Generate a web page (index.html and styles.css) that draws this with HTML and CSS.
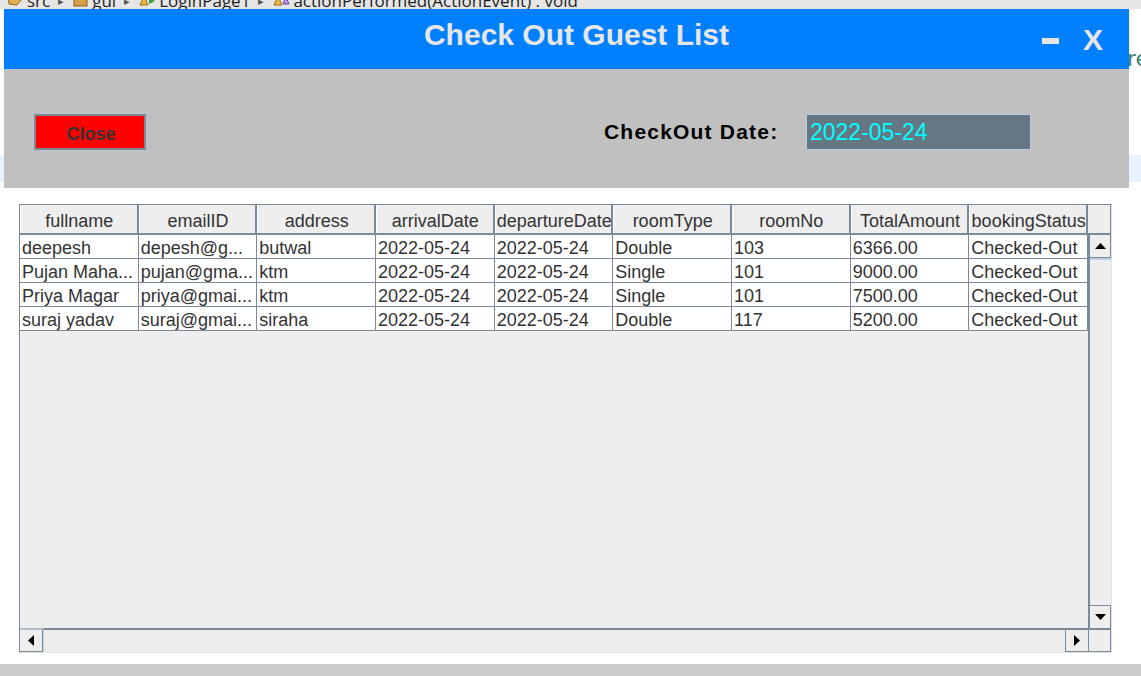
FILE: index.html
```html
<!DOCTYPE html>
<html lang="en">
<head>
<meta charset="utf-8">
<title>Check Out Guest List</title>
<link rel="stylesheet" href="styles.css">
</head>
<body>
<div class="screen">
  <div class="crumbs">
    <div class="crumbs-line">
      <svg class="ci" width="17" height="16" viewBox="0 0 17 16"><path d="M1 6 L7 4 L15 6 L10 12 L2 11 Z" fill="#e0b050" stroke="#9a6a20" stroke-width="1"/></svg>
      <span class="ct">src</span>
      <span class="sep">▸</span>
      <svg class="ci" width="16" height="16" viewBox="0 0 16 16"><rect x="1" y="3" width="13" height="10" fill="#d9a24a" stroke="#8a5a1a"/></svg>
      <span class="ct">gui</span>
      <span class="sep">▸</span>
      <svg class="ci" width="17" height="16" viewBox="0 0 17 16"><path d="M1 12 L5 3 L9 12 Z" fill="#e8b840" stroke="#9a7010"/><path d="M10 5 L16 8 L10 11 Z" fill="#30a040"/></svg>
      <span class="ct">LoginPage1</span>
      <span class="sep">▸</span>
      <svg class="ci" width="17" height="16" viewBox="0 0 17 16"><path d="M1 12 L5 3 L9 12 Z" fill="#e8b840" stroke="#9a7010"/><path d="M10 11 L13 4 L16 11 Z" fill="#c0a0e0" stroke="#6040a0"/></svg>
      <span class="ct">actionPerformed(ActionEvent) : void</span>
    </div>
  </div>
  <div class="line-hl"></div>
  <div class="code-peek">re</div>

  <div class="frame">
    <header class="titlebar">
      <h1 class="title">Check Out Guest List</h1>
      <div class="controls">
        <span class="min"></span>
        <span class="x">X</span>
      </div>
    </header>

    <div class="toolbar">
      <button class="close-btn">Close</button>
      <span class="date-label">CheckOut Date:</span>
      <div class="date-field">2022-05-24</div>
    </div>

    <div class="content">
      <div class="scrollpane">
        <div class="thead">
          <div class="th">fullname</div>
          <div class="th">emailID</div>
          <div class="th">address</div>
          <div class="th">arrivalDate</div>
          <div class="th">departureDate</div>
          <div class="th">roomType</div>
          <div class="th">roomNo</div>
          <div class="th">TotalAmount</div>
          <div class="th">bookingStatus</div>
        </div>
        <div class="hcorner-top"></div>

        <div class="viewport">
          <div class="tr">
            <div class="td">deepesh</div><div class="td">depesh@g...</div><div class="td">butwal</div>
            <div class="td">2022-05-24</div><div class="td">2022-05-24</div><div class="td">Double</div>
            <div class="td">103</div><div class="td">6366.00</div><div class="td">Checked-Out</div>
          </div>
          <div class="tr">
            <div class="td">Pujan Maha...</div><div class="td">pujan@gma...</div><div class="td">ktm</div>
            <div class="td">2022-05-24</div><div class="td">2022-05-24</div><div class="td">Single</div>
            <div class="td">101</div><div class="td">9000.00</div><div class="td">Checked-Out</div>
          </div>
          <div class="tr">
            <div class="td">Priya Magar</div><div class="td">priya@gmai...</div><div class="td">ktm</div>
            <div class="td">2022-05-24</div><div class="td">2022-05-24</div><div class="td">Single</div>
            <div class="td">101</div><div class="td">7500.00</div><div class="td">Checked-Out</div>
          </div>
          <div class="tr">
            <div class="td">suraj yadav</div><div class="td">suraj@gmai...</div><div class="td">siraha</div>
            <div class="td">2022-05-24</div><div class="td">2022-05-24</div><div class="td">Double</div>
            <div class="td">117</div><div class="td">5200.00</div><div class="td">Checked-Out</div>
          </div>
        </div>

        <div class="vscroll">
          <div class="vbtn vbtn-up"><svg width="11" height="6" viewBox="0 0 11 6"><polygon points="0,6 5.5,0 11,6" fill="#000"/></svg></div>
          <div class="vtrack"></div>
          <div class="vbtn vbtn-down"><svg width="11" height="6" viewBox="0 0 11 6"><polygon points="0,0 11,0 5.5,6" fill="#000"/></svg></div>
        </div>

        <div class="hscroll">
          <div class="hbtn hbtn-left"><svg width="6" height="11" viewBox="0 0 6 11"><polygon points="6,0 6,11 0,5.5" fill="#000"/></svg></div>
          <div class="htrack"></div>
          <div class="hbtn hbtn-right"><svg width="6" height="11" viewBox="0 0 6 11"><polygon points="0,0 6,5.5 0,11" fill="#000"/></svg></div>
        </div>
        <div class="hcorner"></div>
      </div>
    </div>
  </div>

  <div class="statusbar"></div>
</div>
</body>
</html>
```

FILE: styles.css
```css
* { box-sizing: border-box; }

html, body {
  margin: 0;
  padding: 0;
  background: #ffffff;
}

body {
  font-family: "Liberation Sans", Arial, sans-serif;
}

.screen {
  position: relative;
  width: 1141px;
  height: 676px;
  overflow: hidden;
  background: #ffffff;
}

/* Eclipse breadcrumb peeking above the window */
.crumbs {
  height: 9px;
  background: #e6e6e6;
  overflow: hidden;
  font-family: "Open Sans", "Noto Sans", sans-serif;
  font-size: 17px;
  color: #1e1e1e;
}

.crumbs-line {
  display: flex;
  align-items: center;
  height: 16px;
  margin-top: -7px;
  line-height: 16px;
  padding-left: 7px;
  white-space: nowrap;
}

.ci { flex: 0 0 auto; margin-right: 3px; }

.sep {
  font-size: 11px;
  color: #555;
  margin: 0 9px 0 8px;
}

.line-hl {
  position: absolute;
  left: 0;
  right: 0;
  top: 155px;
  height: 27px;
  background: #e8f2fe;
}

.code-peek {
  position: absolute;
  left: 1127px;
  top: 48px;
  font-family: "DejaVu Sans", sans-serif;
  font-size: 22px;
  line-height: 21px;
  color: #3f7f6f;
}

/* Undecorated Swing frame */
.frame {
  position: relative;
  z-index: 1;
  width: 1125px;
  margin-left: 4px;
  background: #ffffff;
}

.titlebar {
  height: 60px;
  background: #0080ff;
  display: flex;
  align-items: flex-start;
}

.title {
  flex: 1;
  margin: 0;
  padding: 11px 0 0 107px;
  text-align: center;
  font-size: 30px;
  line-height: 30px;
  font-weight: bold;
  color: #e6e6e6;
}

.controls {
  display: flex;
  align-items: flex-start;
  padding-right: 26px;
}

.min {
  display: block;
  width: 17px;
  height: 6px;
  margin-top: 29px;
  margin-right: 24px;
  background: #e6e6e6;
}

.x {
  display: block;
  margin-top: 16px;
  font-size: 30px;
  line-height: 30px;
  font-weight: bold;
  color: #e6e6e6;
}

.toolbar {
  height: 119px;
  background: #c0c0c0;
  display: flex;
  align-items: flex-start;
  padding: 45px 0 0 30px;
}

.close-btn {
  flex: 0 0 112px;
  height: 36px;
  margin: 0 458px 0 0;
  padding: 4px 0 0 2px;
  background: #ff0000;
  border: 2px solid #7a8a99;
  font-family: "Liberation Sans", Arial, sans-serif;
  font-size: 18px;
  line-height: 28px;
  font-weight: bold;
  color: #333333;
  text-align: center;
}

.date-label {
  flex: 0 0 202px;
  font-size: 21px;
  line-height: 36px;
  font-weight: bold;
  letter-spacing: 1.2px;
  color: #000000;
  white-space: nowrap;
}

.date-field {
  width: 225px;
  height: 36px;
  padding-left: 3px;
  background: #647783;
  border: 1px solid #b3cde6;
  font-size: 23px;
  line-height: 34px;
  color: #00ffff;
}

/* Table area */
.content {
  height: 476px;
  background: #ffffff;
  padding: 16px 0 0 15px;
}

.scrollpane {
  width: 1093px;
  height: 449px;
  border-style: solid;
  border-width: 1px;
  border-color: #7a8a99 #e2e2e2 #e2e2e2 #7a8a99;
  display: grid;
  grid-template-columns: 1068px 23px;
  grid-template-rows: 30px 393px 24px;
  color: #333333;
  font-size: 18px;
}

.thead {
  display: grid;
  grid-template-columns: repeat(9, 1fr);
}

.th {
  height: 30px;
  padding: 5px 0 0 2px;
  line-height: 23px;
  background: #eeeeee;
  border-right: 2px solid #7a8a99;
  border-bottom: 2px solid #7a8a99;
  box-shadow: inset 1px 0 0 #ffffff;
  text-align: center;
  white-space: nowrap;
  overflow: hidden;
}

.hcorner-top {
  background: #eeeeee;
  border-right: 1px solid #7a8a99;
  border-bottom: 2px solid #7a8a99;
}

.viewport {
  background: #eeeeee;
  overflow: hidden;
}

.tr {
  display: grid;
  grid-template-columns: repeat(9, 1fr);
  background: #ffffff;
}

.td {
  height: 24px;
  padding-left: 2px;
  line-height: 26px;
  border-right: 1px solid #7a8a99;
  border-bottom: 1px solid #7a8a99;
  white-space: nowrap;
  overflow: hidden;
}

.vscroll {
  display: flex;
  flex-direction: column;
  background: #eeeeee;
  border-left: 2px solid #7a8a99;
}

.vbtn {
  height: 23px;
  display: flex;
  align-items: center;
  justify-content: center;
  border-right: 1px solid #7a8a99;
  background: #eeeeee;
}

.vbtn-up { border-bottom: 1px solid #7a8a99; }
.vbtn-down { border-top: 1px solid #7a8a99; }

.vtrack {
  flex: 1;
  border-top: 2px solid #b8cfe6;
}

.hscroll {
  display: flex;
  background: #eeeeee;
}

.hbtn {
  width: 23px;
  display: flex;
  align-items: center;
  justify-content: center;
  background: #eeeeee;
}

.hbtn-left {
  border-top: 2px solid #b3c0cd;
  border-right: 1px solid #7a8a99;
  border-bottom: 1px solid #7a8a99;
}

.hbtn-right {
  border-top: 2px solid #7a8a99;
  border-left: 1px solid #7a8a99;
  border-bottom: 1px solid #7a8a99;
}

.htrack {
  flex: 1;
  border-top: 2px solid #7a8a99;
  border-left: 1px solid #b8cfe6;
}

.hcorner {
  background: #eeeeee;
  border: 1px solid #7a8a99;
  border-top-width: 2px;
}

.statusbar {
  height: 12px;
  background: #cccccc;
}
```
